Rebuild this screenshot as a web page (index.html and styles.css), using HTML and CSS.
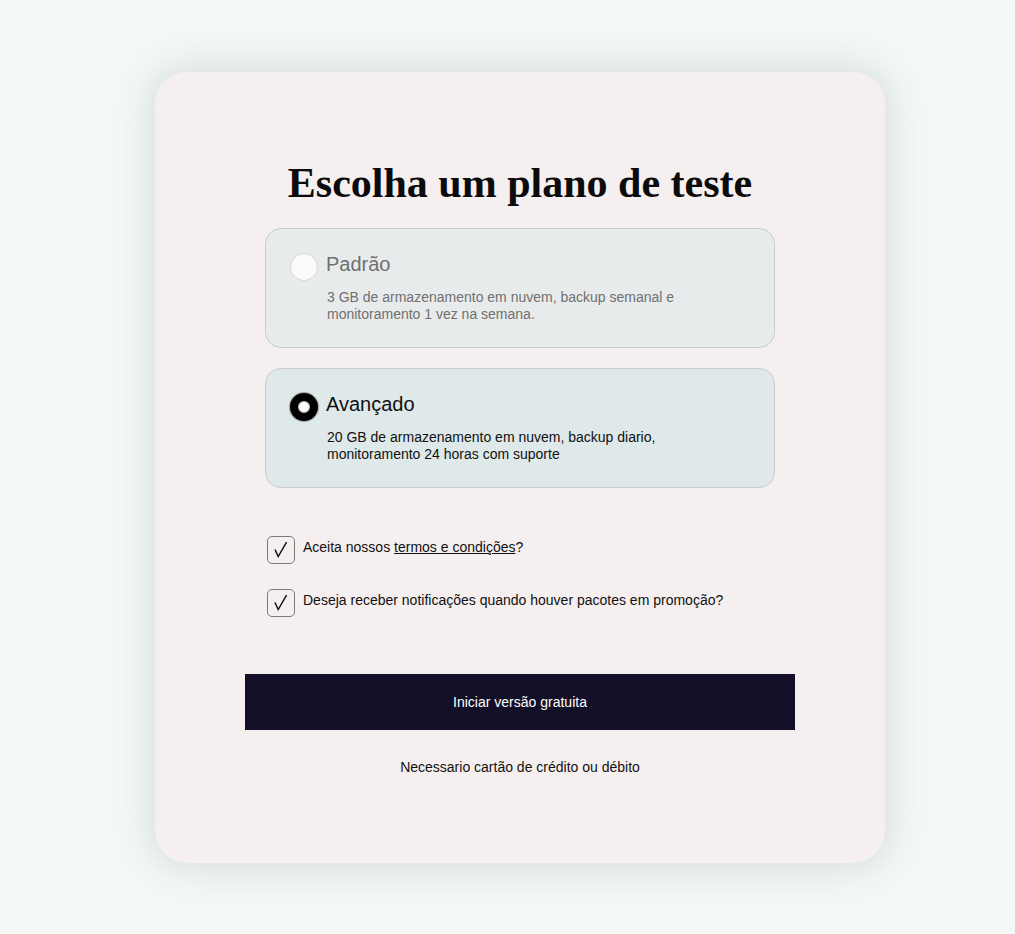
FILE: index.html
```html
<!DOCTYPE html>
<html lang="pt">
<head>
<meta charset="utf-8">
<title>Escolha um plano de teste</title>
<link rel="stylesheet" href="styles.css">
</head>
<body>
<main class="card">
  <h1 class="title">Escolha um plano de teste</h1>
  <div class="plans">
    <label class="plan plan-off">
      <span class="radio"></span>
      <span class="plan-name">Padrão</span>
      <span class="plan-desc">3 GB de armazenamento em nuvem, backup semanal e monitoramento 1 vez na semana.</span>
    </label>
    <label class="plan plan-on">
      <span class="radio radio-on"></span>
      <span class="plan-name">Avançado</span>
      <span class="plan-desc">20 GB de armazenamento em nuvem, backup diario, monitoramento 24 horas com suporte</span>
    </label>
  </div>
  <div class="checks">
    <div class="check-row">
      <span class="box"><svg width="28" height="28" viewBox="0 0 28 28"><polyline points="7.5,13.5 11,21 20,5.5" fill="none" stroke="#111" stroke-width="1.6" stroke-linejoin="miter"/></svg></span>
      <span class="check-text">Aceita nossos <a class="link" href="#">termos e condições</a>?</span>
    </div>
    <div class="check-row">
      <span class="box"><svg width="28" height="28" viewBox="0 0 28 28"><polyline points="7.5,13.5 11,21 20,5.5" fill="none" stroke="#111" stroke-width="1.6" stroke-linejoin="miter"/></svg></span>
      <span class="check-text">Deseja receber notificações quando houver pacotes em promoção?</span>
    </div>
  </div>
  <button class="cta" type="button">Iniciar versão gratuita</button>
  <p class="note">Necessario cartão de crédito ou débito</p>
</main>
</body>
</html>
```
FILE: styles.css
```css
html, body {
  margin: 0;
  padding: 0;
}
body {
  background: #f3f8f7;
  font-family: "Liberation Sans", Arial, sans-serif;
  color: #111;
  padding: 72px 0 71px 155px;
}
.card {
  box-sizing: border-box;
  width: 730px;
  height: 791px;
  background: #f5efef;
  border-radius: 32px;
  box-shadow: 0 0 36px 4px rgba(40, 60, 60, 0.14);
  padding: 87px 90px 0;
  display: flex;
  flex-direction: column;
  align-items: center;
}
.title {
  margin: 0 0 21px;
  font-family: "Liberation Serif", "Times New Roman", serif;
  font-weight: 700;
  font-size: 42px;
  line-height: 48px;
  color: #0b0b0b;
  text-align: center;
}
.plans {
  width: 510px;
  display: flex;
  flex-direction: column;
  gap: 20px;
}
.plan {
  box-sizing: border-box;
  height: 120px;
  border: 1px solid #c9cccc;
  border-radius: 16px;
  padding: 24px 36px 0 24px;
  display: grid;
  grid-template-columns: 28px 1fr;
  grid-template-rows: 28px auto;
  align-content: start;
  column-gap: 8px;
  row-gap: 8px;
  align-items: center;
}
.plan-off {
  background: #e8ebeb;
  color: #707070;
}
.plan-on {
  background: #dfe9e9;
  color: #111;
}
.radio {
  box-sizing: border-box;
  width: 28px;
  height: 28px;
  border-radius: 50%;
  background: #fbfbfb;
  border: 1px solid #d6d6d6;
}
.radio-on {
  background: #fff;
  border: 8px solid #000;
  box-shadow: 0 0 1px 1px rgba(0,0,0,0.3), inset 0 0 1px 1px rgba(0,0,0,0.3);
}
.plan-name {
  font-size: 20px;
  line-height: 22px;
  align-self: start;
}
.plan-desc {
  grid-column: 2;
  font-size: 14px;
  line-height: 17px;
  padding-left: 1px;
  align-self: start;
}
.checks {
  width: 510px;
  margin-top: 48px;
  display: flex;
  flex-direction: column;
  gap: 25px;
}
.check-row {
  display: flex;
  align-items: flex-start;
  gap: 8px;
  padding-left: 2px;
}
.box {
  box-sizing: border-box;
  width: 28px;
  height: 28px;
  border: 1px solid #7a7a7a;
  border-radius: 5px;
  display: flex;
  align-items: center;
  justify-content: center;
}
.box svg {
  display: block;
}
.check-text {
  font-size: 14px;
  line-height: 17px;
  color: #111;
  padding-top: 3px;
}
.link {
  color: #111;
  text-decoration: underline;
}
.cta {
  margin-top: 57px;
  width: 550px;
  height: 56px;
  border: 0;
  background: #130f26;
  color: #fff;
  font-family: "Liberation Sans", Arial, sans-serif;
  font-size: 14px;
  cursor: pointer;
}
.note {
  margin: 29px 0 0;
  font-size: 14px;
  line-height: 17px;
  color: #111;
  text-align: center;
}
```
